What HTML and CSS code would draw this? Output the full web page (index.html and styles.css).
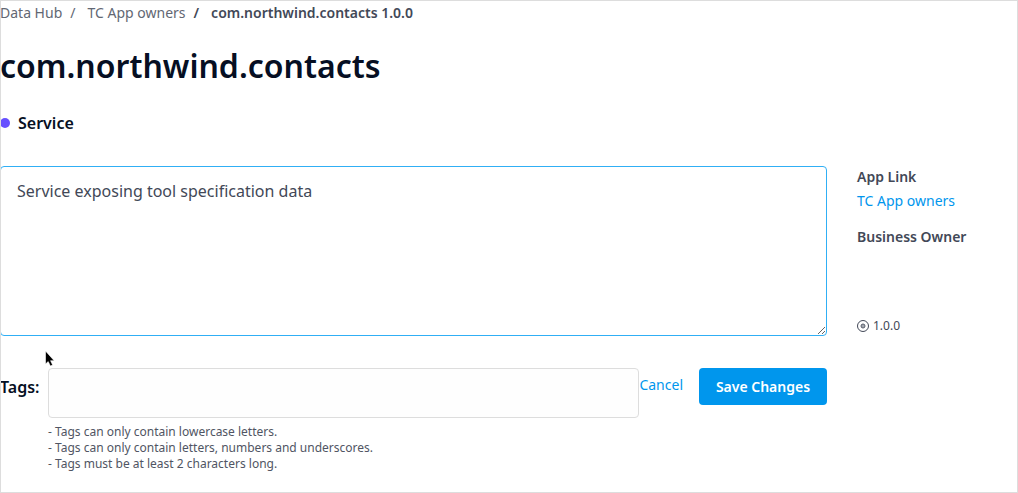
FILE: index.html
```html
<!DOCTYPE html>
<html lang="en">
<head>
<meta charset="utf-8">
<meta name="viewport" content="width=device-width, initial-scale=1">
<title>com.northwind.contacts</title>
<link rel="stylesheet" href="styles.css">
</head>
<body>
<div class="page">
  <nav class="breadcrumb" aria-label="Breadcrumb">
    <a href="#">Data Hub</a>
    <span class="separator">/</span>
    <a href="#">TC App owners</a>
    <span class="separator current">/</span>
    <span class="current">com.northwind.contacts 1.0.0</span>
  </nav>
  <h1 class="title">com.northwind.contacts</h1>
  <div class="kind"><span class="dot"></span>Service</div>
  <div class="content">
    <form class="editor">
      <textarea class="description" aria-label="Description">Service exposing tool specification data</textarea>
      <div class="form-row">
        <label class="tags-label" for="tags">Tags:</label>
        <div class="tags">
          <input class="tags-input" id="tags" type="text">
          <ul class="hints">
            <li>- Tags can only contain lowercase letters.</li>
            <li>- Tags can only contain letters, numbers and underscores.</li>
            <li>- Tags must be at least 2 characters long.</li>
          </ul>
        </div>
        <div class="actions">
          <button class="cancel" type="button">Cancel</button>
          <button class="save" type="submit">Save Changes</button>
        </div>
      </div>
    </form>
    <aside class="details">
      <h2 class="details-title">App Link</h2>
      <a class="app-link" href="#">TC App owners</a>
      <h2 class="details-title">Business Owner</h2>
      <div class="version">
        <svg class="version-icon" viewBox="0 0 12 12" aria-hidden="true">
          <circle cx="6" cy="6" r="5.5" fill="none" stroke="currentColor"/>
          <circle cx="6" cy="6" r="2" fill="#a3a7af" stroke="#5a5f6c"/>
        </svg>
        1.0.0
      </div>
    </aside>
  </div>
  <svg class="cursor" viewBox="0 0 12 18" aria-hidden="true">
    <path d="M2.5 1V14L5.2 11.6L7.4 16L9.6 15L7.6 10.7H11.2Z" fill="#000" stroke="#fff" stroke-width="0.6"/>
  </svg>
</div>
</body>
</html>
```
FILE: styles.css
```css
* {
  box-sizing: border-box;
}

body {
  margin: 0;
  background: #fff;
  color: #424857;
  font: 14px/20px "Noto Sans", sans-serif;
}

.page {
  position: relative;
  min-height: 100vh;
  overflow: hidden;
}

.page::after {
  position: absolute;
  inset: 0;
  border: 1px solid #ddd;
  content: "";
  pointer-events: none;
}

.breadcrumb {
  display: flex;
  padding-top: 3px;
  color: #626773;
}

.breadcrumb a {
  color: inherit;
  text-decoration: none;
}

.separator {
  margin: 0 12px 0 8px;
}

.breadcrumb .current {
  color: #424857;
  font-weight: 600;
}

.title {
  margin: 21px 0 0;
  color: #060f23;
  font-size: 32px;
  font-weight: 600;
  line-height: 44px;
}

.kind {
  display: flex;
  align-items: center;
  margin-top: 24px;
  color: #060f23;
  font-size: 16px;
  font-weight: 600;
  line-height: 22px;
}

.dot {
  width: 10px;
  height: 10px;
  margin-right: 8px;
  border-radius: 50%;
  background: #6750ff;
}

.content {
  display: grid;
  grid-template-columns: minmax(0, 1fr) 161px;
  gap: 30px;
  margin-top: 32px;
}

.description {
  display: block;
  width: 100%;
  height: 170px;
  padding: 12px 16px;
  border: 1px solid #30aff5;
  border-radius: 4px;
  outline: none;
  background: #fff;
  color: #424857;
  font: 16px/24px "Noto Sans", sans-serif;
  resize: vertical;
}

.form-row {
  display: flex;
  align-items: flex-start;
  margin-top: 32px;
}

.tags-label {
  width: 48px;
  padding-top: 8px;
  color: #060f23;
  font-size: 16px;
  font-weight: 600;
  line-height: 22px;
}

.tags {
  flex: 1;
}

.tags-input {
  display: block;
  width: 100%;
  height: 50px;
  padding: 0 16px;
  border: 1px solid #ddd;
  border-radius: 4px;
  background: #fefefe;
  font: inherit;
}

.hints {
  margin: 6px 0 0;
  padding: 0;
  color: #505563;
  font-size: 12px;
  line-height: 16px;
  list-style: none;
}

.actions {
  display: flex;
  align-items: flex-start;
  gap: 16px;
}

.cancel,
.save {
  border: 0;
  border-radius: 4px;
  font: 14px/20px "Noto Sans", sans-serif;
  cursor: pointer;
}

.cancel {
  padding: 7px 0;
  background: none;
  color: #0096ed;
}

.save {
  width: 128px;
  height: 37px;
  padding: 0;
  background: #0096ed;
  color: #fff;
  font-weight: 600;
}

.details {
  padding-top: 1px;
}

.details-title {
  margin: 0 0 4px;
  font-size: 14px;
  font-weight: 600;
  line-height: 20px;
}

.app-link {
  display: block;
  margin-bottom: 16px;
  color: #0096ed;
  text-decoration: none;
}

.version {
  display: flex;
  align-items: center;
  gap: 4px;
  margin-top: 69px;
  font-size: 12px;
}

.version-icon {
  width: 12px;
  height: 12px;
}

.cursor {
  position: absolute;
  top: 350px;
  left: 43px;
  width: 12px;
  height: 18px;
}
```
